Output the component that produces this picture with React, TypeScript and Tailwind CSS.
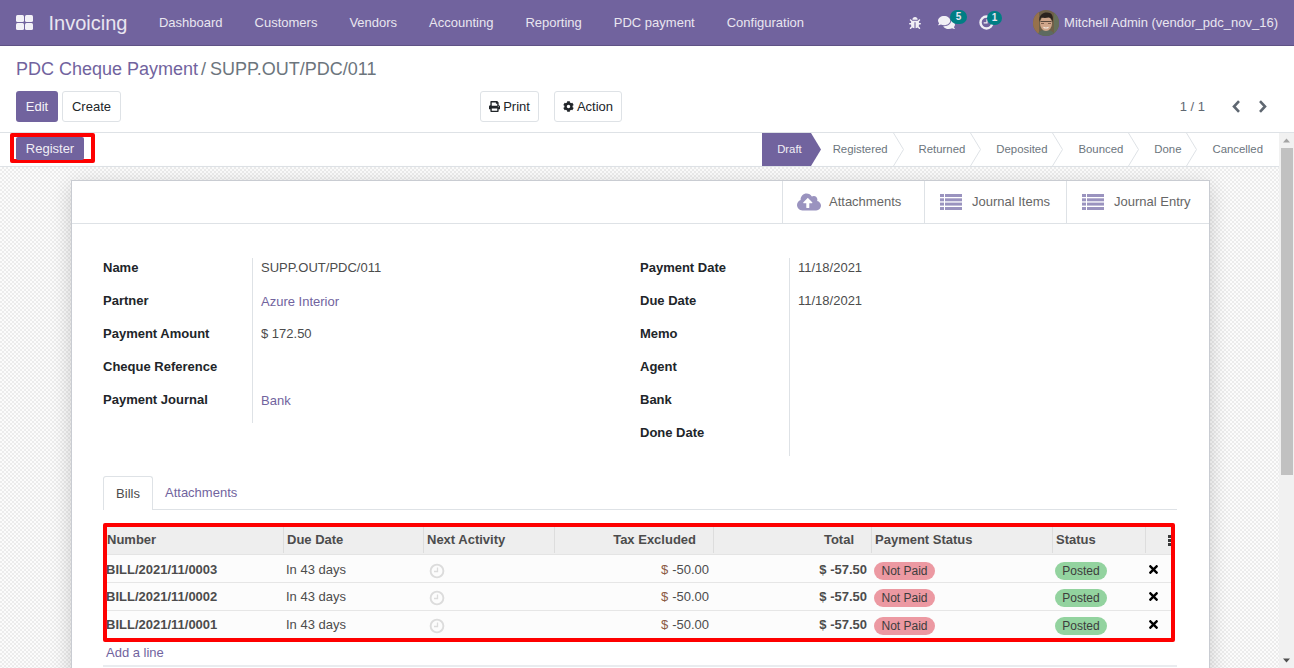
import React from 'react';
import { FaBug, FaComments, FaPrint, FaCog, FaTimes, FaCloudUploadAlt } from 'react-icons/fa';

const menu = ['Dashboard', 'Customers', 'Vendors', 'Accounting', 'Reporting', 'PDC payment', 'Configuration'];
const stages = ['Registered', 'Returned', 'Deposited', 'Bounced', 'Done'];
const leftFields = [
  ['Name', 'SUPP.OUT/PDC/011', false],
  ['Partner', 'Azure Interior', true],
  ['Payment Amount', '$ 172.50', false],
  ['Cheque Reference', '', false],
  ['Payment Journal', 'Bank', true],
] as const;
const rightFields = [
  ['Payment Date', '11/18/2021'],
  ['Due Date', '11/18/2021'],
  ['Memo', ''],
  ['Agent', ''],
  ['Bank', ''],
  ['Done Date', ''],
];
const bills = ['BILL/2021/11/0003', 'BILL/2021/11/0002', 'BILL/2021/11/0001'];
const gridCols = 'grid grid-cols-[177px_140px_131px_159px_158px_181px_93px_25px]';

const ListIcon = () => (
  <svg width="22" height="16" viewBox="0 0 22 16" fill="#9a93bf">
    <rect x="0" y="0" width="4" height="3" />
    <rect x="5" y="0" width="17" height="3" />
    <rect x="0" y="4.3" width="4" height="3" />
    <rect x="5" y="4.3" width="17" height="3" />
    <rect x="0" y="8.6" width="4" height="3" />
    <rect x="5" y="8.6" width="17" height="3" />
    <rect x="0" y="13" width="4" height="3" />
    <rect x="5" y="13" width="17" height="3" />
  </svg>
);

const ClockIcon = ({ size, color, width }: { size: number; color: string; width: number }) => (
  <svg width={size} height={size} viewBox="0 0 16 16" fill="none" stroke={color} strokeWidth={width}>
    <circle cx="8" cy="8" r="6.4" />
    <path d="M8.500 4.500v4H5" strokeWidth="1.300" />
  </svg>
);

const Avatar = () => (
  <svg width="26" height="26" viewBox="0 0 26 26" className="rounded-full">
    <rect width="26" height="26" fill="#6f6048" />
    <rect x="0" y="0" width="6" height="26" fill="#96714c" />
    <rect x="21" y="0" width="5" height="26" fill="#66705a" />
    <path d="M4 26c1-5 5-6 9-6s8 1 9 6z" fill="#5d6a60" />
    <ellipse cx="13" cy="13.500" rx="6" ry="7.500" fill="#cfa58a" />
    <path d="M6.500 12C5.500 5 9.500 2.500 14 2.500s7 3 5.500 9.500c-.5-2.500-1.500-4-3.500-4.500-3 .5-5.500.5-7.500 0-1 1-1.500 2.500-2 4.500z" fill="#2b231e" />
    <path d="M7.500 11.500h4.500M14 11.500h4.500M12 11.500h2" stroke="#3a302a" strokeWidth="0.800" fill="none" />
    <path d="M8 13.500h3M15 13.500h3" stroke="#6b4e3e" strokeWidth="0.800" fill="none" />
    <path d="M10.500 17.200c1.500 1 3.500 1 5 0" stroke="#f3e9e0" strokeWidth="1.100" fill="none" />
  </svg>
);

const Chevron = () => (
  <svg width="11" height="33" viewBox="0 0 11 33" fill="none" stroke="#dee2e6" className="absolute right-0 top-0">
    <path d="M0.500 0l10 16.500-10 16.500" />
  </svg>
);

export default function App() {
  return (
    <div className="h-[668px] w-[1294px] overflow-hidden bg-white font-['Liberation_Sans',Arial,sans-serif] text-[13px] text-[#4c4c4c]">
      <header className="flex h-[46px] items-center border-b border-[#5f5285] bg-[#71639e] text-[#e9e6f0]">
        <div className="ml-4 grid grid-cols-2 gap-[1.500px]">
          <span className="h-[7px] w-[7.500px] rounded-[1.500px] bg-[#f3f1f7]" />
          <span className="h-[7px] w-[7.500px] rounded-[1.500px] bg-[#f3f1f7]" />
          <span className="h-[7px] w-[7.500px] rounded-[1.500px] bg-[#f3f1f7]" />
          <span className="h-[7px] w-[7.500px] rounded-[1.500px] bg-[#f3f1f7]" />
        </div>
        <span className="ml-4 text-[20px]">Invoicing</span>
        <nav className="ml-[15.500px] flex">
          {menu.map(m => (
            <span key={m} className="px-4">{m}</span>
          ))}
        </nav>
        <div className="ml-auto flex items-center pr-4">
          <FaBug className="mr-[17px] text-[12px] text-[#f1eff5]" />
          <div className="relative mr-[24px]">
            <FaComments className="text-[17px] text-[#f1eff5]" />
            <span className="absolute -right-[12px] -top-[4px] flex h-[14px] w-[17px] items-center justify-center rounded-full bg-[#017e84] text-[10px] font-bold leading-none text-[#e9e6f0]">5</span>
          </div>
          <div className="relative mr-[39px]">
            <ClockIcon size={15} color="#f1eff5" width={2.600} />
            <span className="absolute -right-[8px] -top-[4px] flex h-[14px] w-[15px] items-center justify-center rounded-full bg-[#017e84] text-[10px] font-bold leading-none text-[#e9e6f0]">1</span>
          </div>
          <Avatar />
          <span className="ml-[5px]">Mitchell Admin (vendor_pdc_nov_16)</span>
        </div>
      </header>

      <section className="h-[86px] px-4 pt-[11px]">
        <div className="flex h-[23px] items-center text-[18px] leading-none">
          <span className="text-[#71639e]">PDC Cheque Payment</span>
          <span className="ml-[3px] text-[#6c757d]">/</span>
          <span className="ml-[4px] text-[#6c757d]">SUPP.OUT/PDC/011</span>
        </div>
        <div className="mt-[11px] flex h-[31px] items-center">
          <button className="h-[31px] w-[42px] rounded-[3px] bg-[#71639e] text-[#f5f3f8]">Edit</button>
          <button className="ml-1 h-[31px] w-[59px] rounded-[3px] border border-[#dee2e6] bg-white text-[#212529]">Create</button>
          <button className="ml-[359px] flex h-[31px] w-[59px] items-center justify-center gap-[3px] rounded-[3px] border border-[#dee2e6] bg-white text-[#212529]">
            <FaPrint className="text-[11px]" /> Print
          </button>
          <button className="ml-[15px] flex h-[31px] w-[68px] items-center justify-center gap-[3px] rounded-[3px] border border-[#dee2e6] bg-white text-[#212529]">
            <FaCog className="text-[11px]" /> Action
          </button>
          <span className="ml-auto mr-[27px] text-[#5f6771]">1 / 1</span>
          <svg width="8" height="13" viewBox="0 0 8 13" fill="none" stroke="#5f6771" strokeWidth="2.600">
            <path d="M7 1.200L2 6.500l5 5.300" />
          </svg>
          <svg width="8" height="13" viewBox="0 0 8 13" fill="none" stroke="#5f6771" strokeWidth="2.600" className="ml-[19px] mr-[11px]">
            <path d="M1 1.200l5 5.300-5 5.300" />
          </svg>
        </div>
      </section>

      <div className="flex h-[536px]">
        <div className="w-[1279px]">
          <div className="flex h-[35px] items-start justify-between border-y border-[#dee2e6] bg-white">
            <div className="relative ml-[10px] flex h-[30px] w-[85px] items-start rounded-[2px] border-[4px] border-[#fe0000] bg-white">
              <button className="ml-[2px] h-[23px] w-[68px] rounded-[2px] bg-[#71639e] text-[#f0eef5]">Register</button>
            </div>
            <div className="flex h-[33px] items-center text-[11.375px] text-[#6c757d]">
              <div className="relative h-[33px] w-[59px]">
                <svg width="59" height="33" viewBox="0 0 59 33" className="absolute left-0 top-0">
                  <path d="M0 0h49l10 16.500-10 16.500H0z" fill="#71639e" />
                </svg>
                <span className="absolute left-[15.500px] top-[11px] leading-none text-[#f0eef5]">Draft</span>
              </div>
              <span className="relative flex h-[33px] items-center pl-[12px] pr-[16px]">Registered<Chevron /></span>
              {stages.slice(1).map(s => (
                <span key={s} className="relative flex h-[33px] items-center pl-[15px] pr-[16px]">{s}<Chevron /></span>
              ))}
              <span className="pl-[15px] pr-[16px]">Cancelled</span>
            </div>
          </div>

          <div className="h-[501px] bg-[repeating-conic-gradient(#ececec_0_25%,#fcfcfc_0_50%)] bg-[length:4px_4px] pl-[71px] pt-[13px]">
            <div className="h-[500px] w-[1139px] border border-[#c9ccd2] bg-white shadow-[0_5px_20px_-1px_rgba(0,0,0,0.2)]">
              <div className="flex h-[43px] justify-end border-b border-[#dee2e6]">
                <div className="flex w-[142px] items-center gap-2 border-l border-[#dee2e6] pl-[14px] text-[#666]">
                  <FaCloudUploadAlt className="text-[24px] text-[#9a93bf]" /> Attachments
                </div>
                <div className="flex w-[142px] items-center gap-[10px] border-l border-[#dee2e6] pl-[15px] text-[#666]">
                  <ListIcon /> Journal Items
                </div>
                <div className="flex w-[143px] items-center gap-[10px] border-l border-[#dee2e6] pl-[15px] text-[#666]">
                  <ListIcon /> Journal Entry
                </div>
              </div>

              <div className="pl-[31px] pt-[34px]">
                <div className="flex h-[218px]">
                  <div className="flex h-[198px] w-[537px] flex-col">
                    {leftFields.map(([label, value, link]) => (
                      <div key={label} className="flex h-[33px]">
                        <span className="w-[150px] border-r border-[#dee2e6] font-bold text-[#212529]">{label}</span>
                        <span className={link ? 'pl-[8px] pt-[1px] text-[#71639e]' : 'pl-[8px]'}>{value}</span>
                      </div>
                    ))}
                  </div>
                  <div className="flex h-[198px] flex-col">
                    {rightFields.map(([label, value]) => (
                      <div key={label} className="flex h-[33px]">
                        <span className="w-[150px] border-r border-[#dee2e6] font-bold text-[#212529]">{label}</span>
                        <span className="pl-[8px]">{value}</span>
                      </div>
                    ))}
                  </div>
                </div>

                <div className="flex h-[34px] w-[1074px] border-b border-[#dee2e6]">
                  <span className="z-10 flex h-[34px] w-[50px] items-center justify-center rounded-t-[3px] border border-b-0 border-[#dee2e6] bg-white">Bills</span>
                  <span className="ml-3 flex h-[33px] items-center text-[#71639e]">Attachments</span>
                </div>

                <div className="mt-[13px] w-[1072px] rounded-[2px] border-[4px] border-[#fe0000]">
                  <div className={`${gridCols} h-[28px] border-b border-[#e4e4e4] bg-[#eeeeee] pb-[1px] font-bold`}>
                    <span className="flex items-center border-r border-[#dddddd]">Number</span>
                    <span className="flex items-center border-r border-[#dddddd] pl-[3px]">Due Date</span>
                    <span className="flex items-center border-r border-[#dddddd] pl-[3px]">Next Activity</span>
                    <span className="flex items-center justify-end border-r border-[#dddddd] pr-[17px]">Tax Excluded</span>
                    <span className="flex items-center justify-end border-r border-[#dddddd] pr-[17px]">Total</span>
                    <span className="flex items-center border-r border-[#dddddd] pl-[3px]">Payment Status</span>
                    <span className="flex items-center border-r border-[#dddddd] pl-[3px]">Status</span>
                    <span className="flex items-center justify-end">
                      <svg width="3" height="11" viewBox="0 0 3 11" fill="#3a3a3a">
                        <rect width="3" height="3" />
                        <rect y="4" width="3" height="3" />
                        <rect y="8" width="3" height="3" />
                      </svg>
                    </span>
                  </div>
                  {bills.map((b, i) => (
                    <div key={b} className={`${gridCols} bg-[#fcfcfc] ${i === 0 ? 'h-[28px] border-b border-[#e6e6e6] pt-[3px]' : i === 1 ? 'h-[28px] border-b border-[#e6e6e6] pt-[1px]' : 'h-[27px] pt-[1px]'}`}>
                      <span className="-ml-px flex items-center font-bold">{b}</span>
                      <span className="flex items-center pl-[2px]">In 43 days</span>
                      <span className="flex items-center pl-[5px] pt-[2px]"><ClockIcon size={16} color="#dcdcdc" width={1.900} /></span>
                      <span className="flex items-center justify-end pr-[5px]"><span className="mr-[4px] text-[#8a5a44]">$</span> -50.00</span>
                      <span className="flex items-center justify-end pr-[5px] font-bold">$ -57.50</span>
                      <span className="flex items-center pl-[2px]">
                        <span className="flex h-[18px] w-[61px] translate-y-[1px] items-center justify-center rounded-full bg-[#ec99a2] text-[12px] text-[#3d3d3d]">Not Paid</span>
                      </span>
                      <span className="flex items-center pl-[2px]">
                        <span className="flex h-[18px] w-[52px] translate-y-[1px] items-center justify-center rounded-full bg-[#93d39f] text-[12px] text-[#3d3d3d]">Posted</span>
                      </span>
                      <span className="flex items-center pl-[1px]"><FaTimes className="-translate-y-[1px] text-[13px] text-black" /></span>
                    </div>
                  ))}
                </div>

                <div className="flex h-[25px] w-[1074px] items-center border-b-2 border-[#e9ecef] pb-[1px] pl-[3px] text-[#71639e]">Add a line</div>
              </div>
            </div>
          </div>
        </div>

        <div className="flex w-[15px] flex-col items-center border-t border-[#dee2e6] bg-[#f1f1f1]">
          <svg width="15" height="15" viewBox="0 0 15 15" className="shrink-0"><path d="M4 9.500l3.500-4 3.500 4z" fill="#a3a3a3" /></svg>
          <div className="h-[327px] w-[12px] bg-[#c1c1c1]" />
          <svg width="15" height="15" viewBox="0 0 15 15" className="mt-auto shrink-0"><path d="M4 5.500l3.500 4 3.500-4z" fill="#505050" /></svg>
        </div>
      </div>
    </div>
  );
}
